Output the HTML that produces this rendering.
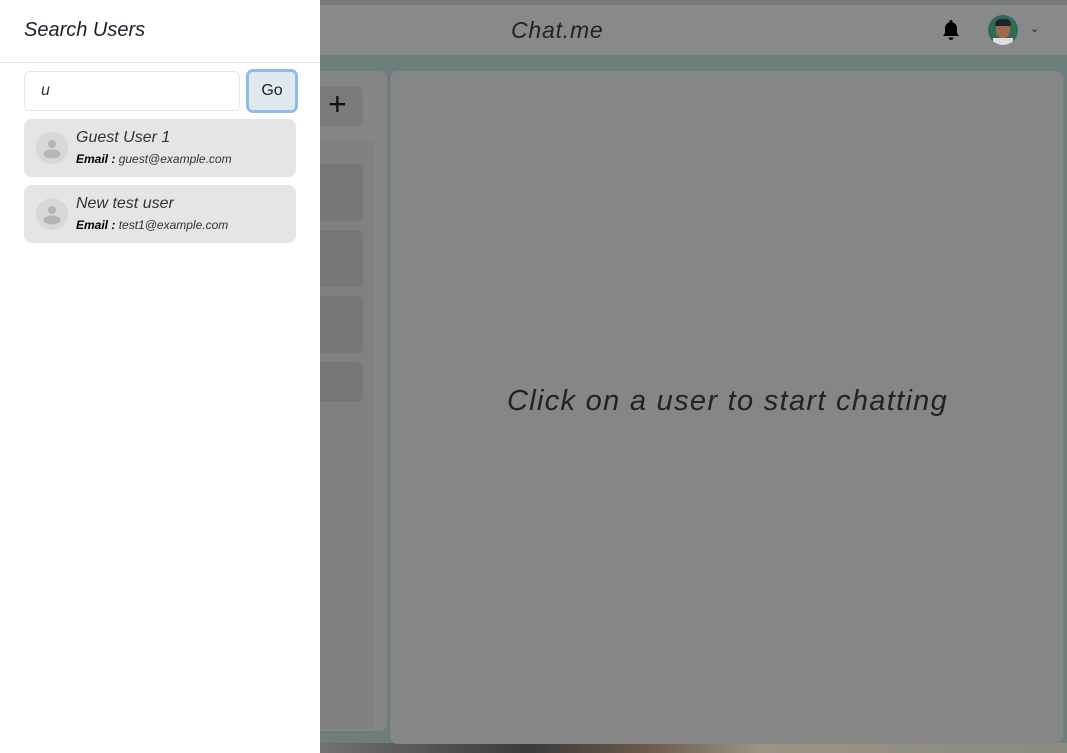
<!DOCTYPE html>
<html><head><meta charset="utf-8"><style>
*{box-sizing:border-box;margin:0;padding:0}
body{width:1067px;height:753px;overflow:hidden;position:relative;background:#6e7e7c;font-family:"Liberation Sans",sans-serif}
.abs{position:absolute}
</style></head><body>
<div class="abs" style="left:0;top:0;width:1067px;height:5px;background:#777b80"></div>
<div class="abs" style="left:300px;top:5px;width:767px;height:50px;background:#898989"></div>
<div class="abs" style="left:300px;top:55px;width:767px;height:16px;background:#6c7f7c"></div>
<div class="abs" style="left:300px;top:743px;width:767px;height:10px;background:linear-gradient(90deg,#777,#3a3a3a 30%,#6b5a4a 45%,#9a9585 60%,#8a8a80)"></div>
<div class="abs" style="left:270px;top:71px;width:117px;height:660px;background:#858585;border-radius:8px"></div>
<div class="abs" style="left:270px;top:86px;width:93px;height:40px;background:#7b7b7b;border-radius:6px"></div>
<div class="abs" style="left:328px;top:86px;font-size:32px;font-weight:300;color:#111">+</div>
<div class="abs" style="left:270px;top:140px;width:104px;height:590px;background:#818181;border-radius:6px"></div>
<div class="abs" style="left:270px;top:164px;width:93px;height:57px;background:#777;border-radius:6px"></div>
<div class="abs" style="left:270px;top:230px;width:93px;height:57px;background:#777;border-radius:6px"></div>
<div class="abs" style="left:270px;top:296px;width:93px;height:57px;background:#777;border-radius:6px"></div>
<div class="abs" style="left:270px;top:362px;width:93px;height:40px;background:#777;border-radius:6px"></div>
<div class="abs" style="left:389px;top:71px;width:674px;height:673px;background:#868686;border-radius:8px;border-left:1px solid #70757f"></div>
<div class="abs" style="left:507px;top:385px;font-size:29px;font-style:italic;color:#222;letter-spacing:1.3px">Click on a user to start chatting</div>
<div class="abs" style="left:511px;top:17px;font-size:23px;font-style:italic;color:#222;letter-spacing:0.8px">Chat.me</div>
<svg class="abs" style="left:941px;top:19px" width="20" height="22" viewBox="0 0 20 22"><path d="M10 1a1.5 1.5 0 0 1 1.5 1.5v.7A6 6 0 0 1 16 9v5l2 3H2l2-3V9a6 6 0 0 1 4.5-5.8v-.7A1.5 1.5 0 0 1 10 1zM7.5 18.5h5a2.5 2.5 0 0 1-5 0z" fill="#000"/></svg>
<div class="abs" style="left:988px;top:15px;width:30px;height:30px;border-radius:50%;background:#2f6a55;overflow:hidden"><div style="position:absolute;left:8px;top:6px;width:14px;height:17px;border-radius:45%;background:#a06a4a"></div><div style="position:absolute;left:7px;top:4px;width:16px;height:7px;border-radius:8px 8px 2px 2px;background:#1e2530"></div><div style="position:absolute;left:5px;top:23px;width:20px;height:10px;background:#ddd"></div></div>
<div class="abs" style="left:1030px;top:22px;font-size:11px;color:#222">⌄</div>
<div class="abs" style="left:0;top:0;width:320px;height:753px;background:#fff"></div>
<div class="abs" style="left:24px;top:19px;font-size:20px;font-style:italic;color:#1a202c">Search Users</div>
<div class="abs" style="left:0;top:62px;width:320px;height:1px;background:#e2e8f0"></div>
<div class="abs" style="left:24px;top:71px;width:216px;height:40px;border:1px solid #e2e8f0;border-radius:6px;padding:10px 16px;font-size:16px;font-style:italic;color:#333">u</div>
<div class="abs" style="left:246px;top:69px;width:52px;height:44px;border:3px solid #90bde8;border-radius:7px;background:#e2e8f0;text-align:center;line-height:38px;font-size:16px;color:#1a202c">Go</div>
<div class="abs" style="left:24px;top:119px;width:272px;height:58px;background:#e5e5e5;border-radius:8px"></div>
<div class="abs" style="left:24px;top:185px;width:272px;height:58px;background:#e5e5e5;border-radius:8px"></div>
<svg class="abs" style="left:36px;top:132px" width="32" height="32"><circle cx="16" cy="16" r="16" fill="#d8d8d8"/><circle cx="16" cy="12" r="4" fill="#b5b5b5"/><ellipse cx="16" cy="22" rx="8.5" ry="4.5" fill="#b5b5b5"/></svg>
<svg class="abs" style="left:36px;top:198px" width="32" height="32"><circle cx="16" cy="16" r="16" fill="#d8d8d8"/><circle cx="16" cy="12" r="4" fill="#b5b5b5"/><ellipse cx="16" cy="22" rx="8.5" ry="4.5" fill="#b5b5b5"/></svg>
<div class="abs" style="left:76px;top:129px;font-size:16px;font-style:italic;color:#333">Guest User 1</div>
<div class="abs" style="left:76px;top:152px;font-size:12px;font-style:italic;color:#333"><b style="color:#000">Email :</b> guest@example.com</div>
<div class="abs" style="left:76px;top:195px;font-size:16px;font-style:italic;color:#333">New test user</div>
<div class="abs" style="left:76px;top:218px;font-size:12px;font-style:italic;color:#333"><b style="color:#000">Email :</b> test1@example.com</div>
</body></html>
